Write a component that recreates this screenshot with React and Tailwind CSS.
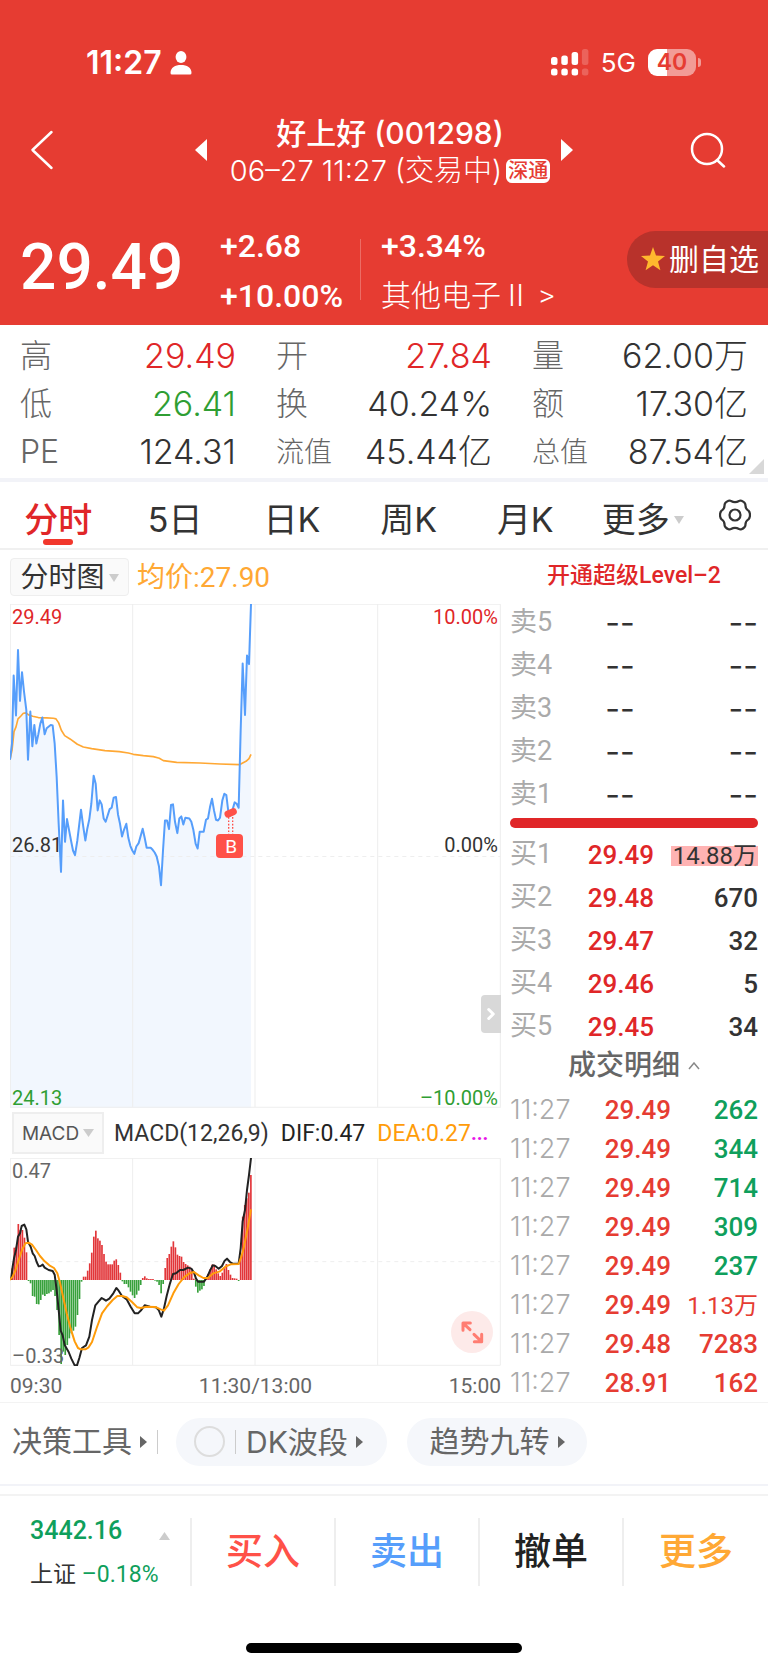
import { ChevronRight } from 'lucide-react'

const stats = [
  { label: '高', value: '29.49', color: 'text-[#e02628]' },
  { label: '开', value: '27.84', color: 'text-[#e02628]' },
  { label: '量', value: '62.00万', color: 'text-[#333]' },
  { label: '低', value: '26.41', color: 'text-[#2f9e33]' },
  { label: '换', value: '40.24%', color: 'text-[#333]' },
  { label: '额', value: '17.30亿', color: 'text-[#333]' },
  { label: 'PE', value: '124.31', color: 'text-[#333]' },
  { label: '流值', value: '45.44亿', color: 'text-[#333]', small: true },
  { label: '总值', value: '87.54亿', color: 'text-[#333]', small: true },
]

const sells = ['卖5', '卖4', '卖3', '卖2', '卖1']

const buys = [
  { label: '买1', price: '29.49', volume: '14.88万' },
  { label: '买2', price: '29.48', volume: '670' },
  { label: '买3', price: '29.47', volume: '32' },
  { label: '买4', price: '29.46', volume: '5' },
  { label: '买5', price: '29.45', volume: '34' },
]

const trades = [
  { price: '29.49', volume: '262', side: 'sell' },
  { price: '29.49', volume: '344', side: 'sell' },
  { price: '29.49', volume: '714', side: 'sell' },
  { price: '29.49', volume: '309', side: 'sell' },
  { price: '29.49', volume: '237', side: 'sell' },
  { price: '29.49', volume: '1.13万', side: 'buy' },
  { price: '29.48', volume: '7283', side: 'buy' },
  { price: '28.91', volume: '162', side: 'buy' },
]

const pricePoints =
  '30,508 36,460 41,256 48,376 54,180 60,332 66,246 72,304 79,360 84,508 91,364 97,468 103,404 109,460 115,432 121,400 127,382 134,432 140,414 152,404 158,406 164,460 170,560 176,700 183,844 189,630 195,754 201,686 213,750 219,780 225,794 232,750 243,658 250,710 256,750 262,714 268,686 274,640 281,556 287,580 293,660 299,630 305,642 311,684 317,694 329,656 335,652 341,622 348,620 354,672 360,700 366,738 372,718 379,700 385,742 391,766 397,780 403,790 409,768 416,758 428,715 434,742 440,772 452,772 458,778 464,786 470,798 477,828 483,884 489,780 495,690 501,690 507,716 513,644 519,642 525,694 532,728 538,684 544,678 550,702 556,682 568,684 574,694 580,718 587,760 593,774 599,724 611,724 618,688 624,684 630,650 636,625 642,660 648,688 654,690 660,682 667,630 673,610 679,614 685,664 691,676 697,660 704,636 710,640 716,652 722,420 728,220 735,374 741,196 747,222 753,42'

const avgPoints =
  '30,508 36,480 42,424 48,410 54,386 62,378 70,369 78,368 86,374 98,378 115,382 140,383 160,384 168,386 176,398 184,420 194,436 210,446 232,462 250,470 275,475 315,481 358,484 385,488 400,492 430,496 460,499 478,504 490,511 530,516 600,518 660,521 718,523 728,518 738,513 747,505 753,492'

// one bar per minute, measured from the zero line
const macdBars = [
  0, 35, 97, 100, 168, 150, 150, 127, 83, -3, -10, -48, -50, -72, -73, -60, -44, -48, -42, -40,
  -35, -30, -48, -90, -165, -252, -215, -225, -195, -175, -160, -152, -140, -105, -57, -5, 10, 10,
  28, 50, 82, 130, 148, 125, 118, 105, 78, 55, 47, 47, 47, 58, 62, 45, 22, -4, -12, -12, -22, -35,
  -46, -54, -44, -32, -15, 6, 11, 5, 3, 3, 3, -2, -5, -15, -40, -12, 36, 66, 78, 100, 116, 98, 76,
  72, 70, 54, 48, 44, 40, 28, 4, -20, -38, -32, -28, -18, 8, 18, 32, 46, 46, 32, 20, 12, 22, 38,
  48, 30, 16, 6, 5, 4, -3, 70, 190, 225, 245, 262, 315,
]

const difPoints =
  '33,390 38,350 42,325 48,300 54,260 60,250 65,228 73,224 79,238 84,275 92,290 98,310 104,318 110,336 116,349 122,348 128,344 134,353 146,360 158,363 164,374 170,420 176,480 182,542 188,556 194,585 206,606 214,626 224,646 231,646 238,624 246,594 258,586 268,560 276,510 286,466 296,454 305,444 312,448 318,452 328,446 340,430 349,414 356,422 366,438 380,448 392,470 404,490 414,490 424,480 434,466 450,470 468,472 476,480 484,500 492,475 500,438 510,400 519,372 528,370 540,360 550,360 564,353 574,356 582,368 588,386 594,395 612,395 622,380 630,362 638,346 646,348 656,356 666,348 674,332 681,326 690,336 698,341 716,341 722,295 728,214 735,180 741,120 747,75 753,24'

const deaPoints =
  '30,390 38,380 46,362 56,330 66,300 76,280 86,278 96,284 108,300 120,318 134,334 148,346 162,354 172,370 180,398 190,444 200,490 212,536 224,574 234,594 242,598 256,598 266,592 276,576 290,534 306,490 322,468 338,450 352,438 366,438 380,442 396,456 412,472 422,474 440,470 466,471 482,478 492,482 504,466 520,430 536,402 552,382 568,370 582,366 596,376 610,384 624,384 640,370 660,364 676,350 692,343 716,342 724,320 732,290 742,240 753,178'

function Triangle({ className, points }) {
  return (
    <svg viewBox="0 0 10 10" preserveAspectRatio="none" className={className} aria-hidden="true">
      <polygon points={points} fill="currentColor" />
    </svg>
  )
}

const LEFT = '10,0 10,10 0,5'
const RIGHT = '0,0 0,10 10,5'
const DOWN = '0,0 10,0 5,10'
const UP = '0,10 10,10 5,0'

function StatusBar() {
  return (
    <div className="flex h-[81px] items-center justify-between pt-[44px] pr-[67px] pl-[86px]">
      <div className="flex items-center gap-2 font-[Inter,sans-serif] text-[32px] leading-none font-semibold">
        11:27
        <svg viewBox="0 0 22 24" className="h-6 w-[22px]" aria-hidden="true">
          <ellipse cx="11" cy="6" rx="5.4" ry="6" fill="#fff" />
          <path d="M0.5 22 C0.5 16.5 5 14 11 14 S21.5 16.5 21.5 22 Q21.5 23.5 20 23.5 H2 Q0.5 23.5 0.5 22 Z" fill="#fff" />
        </svg>
      </div>
      <div className="flex items-center">
        <svg viewBox="0 0 38 27" className="h-[27px] w-[38px]" aria-hidden="true">
          <g fill="#fff">
            <rect x="0" y="8" width="6.5" height="8" rx="2.5" />
            <rect x="10.3" y="6.5" width="6.5" height="9.5" rx="2.5" />
            <rect x="20.6" y="3" width="6.5" height="13" rx="2.5" />
            <rect x="0" y="19.5" width="6.5" height="7" rx="2.5" />
            <rect x="10.3" y="19.5" width="6.5" height="7" rx="2.5" />
            <rect x="20.6" y="19.5" width="6.5" height="7" rx="2.5" />
            <g opacity="0.2">
              <rect x="30.9" y="0" width="6.5" height="16" rx="2.5" />
              <rect x="30.9" y="19.5" width="6.5" height="7" rx="2.5" />
            </g>
          </g>
        </svg>
        <span className="ml-3 font-[Inter,sans-serif] text-[26px] leading-none">5G</span>
        <div className="ml-3 flex h-[27px] w-12 items-center justify-center rounded-[9px] bg-linear-to-r from-white from-40% to-[#f29b96] to-40% font-[Inter,sans-serif] text-[23px] leading-none font-semibold text-[#e63c32]">
          40
        </div>
        <div className="ml-[2px] h-[9px] w-[3px] rounded-r-full bg-[#f29b96]" />
      </div>
    </div>
  )
}

function Header() {
  return (
    <header className="h-[325px] bg-[#e63c32] text-white">
      <StatusBar />
      <div className="mt-[33px] flex h-[72px] items-center justify-between">
        <button className="w-[78px] pl-[30px]" aria-label="返回">
          <svg viewBox="0 0 24 40" className="h-10 w-6" fill="none" stroke="#fff" strokeWidth="2.5" strokeLinecap="round" strokeLinejoin="round">
            <path d="M21.5 2 L2.5 20 L21.5 38" />
          </svg>
        </button>
        <div className="flex items-center">
          <button aria-label="上一只">
            <Triangle className="h-[22px] w-3" points={LEFT} />
          </button>
          <div className="flex w-[354px] flex-col items-center gap-[6px] pt-1 pl-3 font-[Inter,'Noto_Sans_CJK_SC',sans-serif] whitespace-nowrap">
            <h1 className="text-[30px] leading-8 font-medium">好上好 (001298)</h1>
            <div className="flex items-center gap-1 text-[29px] leading-8 font-light">
              06–27 11:27 (交易中)
              <span className="rounded-md bg-white px-[2px] text-[20px] leading-6 font-medium text-[#e63c32]">深通</span>
            </div>
          </div>
          <button aria-label="下一只">
            <Triangle className="h-[22px] w-3" points={RIGHT} />
          </button>
        </div>
        <button className="w-[78px]" aria-label="搜索">
          <svg viewBox="0 0 36 36" className="size-9" fill="none" stroke="#fff" strokeWidth="2.5" strokeLinecap="round">
            <circle cx="17" cy="17" r="15" />
            <path d="M27 28 L34 34.5" />
          </svg>
        </button>
      </div>

      <div className="mt-[35px] flex items-center pl-5 font-[Roboto,'Noto_Sans_CJK_SC',sans-serif]">
        <div className="mb-[6px] w-[200px] text-[64px] leading-none font-medium">29.49</div>
        <div className="flex h-[100px] w-[140px] flex-col justify-between text-[32px] leading-[50px] font-medium">
          <span>+2.68</span>
          <span>+10.00%</span>
        </div>
        <div className="mb-1 h-[61px] w-px bg-white/25" />
        <div className="ml-5 flex h-[100px] flex-1 flex-col justify-between text-[32px] leading-[50px] font-medium">
          <span>+3.34%</span>
          <a href="#sector" className="flex gap-2 text-[30px] font-light">
            <span>其他电子Ⅱ</span>
            <span>&gt;</span>
          </a>
        </div>
        <button className="mb-6 flex h-[57px] w-[141px] items-center justify-end gap-1 rounded-l-full bg-[#b8322b] pr-[9px] text-[30px] font-normal">
          <svg viewBox="0 0 24 24" className="size-6" aria-hidden="true">
            <path d="M12 0 L15 8.4 L24 8.9 L17 14.5 L19.4 23.2 L12 18.3 L4.6 23.2 L7 14.5 L0 8.9 L9 8.4 Z" fill="#ffb82e" />
          </svg>
          删自选
        </button>
      </div>
    </header>
  )
}

function Stats() {
  return (
    <section className="relative border-b-4 border-[#f2f3f8] pt-[7px] pb-[2px]">
      <dl className="grid grid-cols-3 font-[Inter,'Noto_Sans_CJK_SC',sans-serif]">
        {stats.map((s) => (
          <div key={s.label} className="flex h-12 items-center justify-between px-5">
            <dt className={s.small ? 'text-[28px] leading-none font-light text-[#666]' : 'text-[32px] leading-none font-light text-[#666]'}>
              {s.label}
            </dt>
            <dd className={`text-[34px] leading-none font-light ${s.color}`}>{s.value}</dd>
          </div>
        ))}
      </dl>
      <Triangle className="absolute right-1 bottom-1 size-[15px] text-[#d8d8d8]" points="10,0 10,10 0,10" />
    </section>
  )
}

function Tabs() {
  return (
    <nav className="grid h-[68px] grid-cols-[repeat(5,15.2%)_15.4%_8.6%] border-b-2 border-[#f0f0f0] pt-[10px] font-[Inter,'Noto_Sans_CJK_SC',sans-serif] text-[34px] leading-none text-[#333]">
      <button className="relative font-medium text-[#e02628]">
        分时
        <span className="absolute bottom-[3px] left-1/2 h-[6px] w-[30px] -translate-x-1/2 rounded-full bg-[#f2372c]" />
      </button>
      <button>5日</button>
      <button>日K</button>
      <button>周K</button>
      <button>月K</button>
      <button className="flex items-center justify-center gap-1">
        更多
        <Triangle className="h-2 w-[10px] text-[#ccc]" points={DOWN} />
      </button>
      <button className="flex justify-center pt-[7px]" aria-label="设置">
        <svg viewBox="0 0 32 32" className="size-8" fill="none" stroke="#333" strokeWidth="2.2" strokeLinejoin="round">
          <path d="M9.5 1.8 Q11 1.2 12 2 Q16 4.4 20 2 Q21 1.2 22.5 1.8 Q26 3.2 26.4 5.5 Q26.2 9.8 29.4 11.6 Q31 13 31 16 Q31 19 29.4 20.4 Q26.2 22.2 26.4 26.5 Q26 28.8 22.5 30.2 Q21 30.8 20 30 Q16 27.6 12 30 Q11 30.8 9.5 30.2 Q6 28.8 5.6 26.5 Q5.8 22.2 2.6 20.4 Q1 19 1 16 Q1 13 2.6 11.6 Q5.8 9.8 5.6 5.5 Q6 3.2 9.5 1.8 Z" />
          <circle cx="16" cy="16" r="5.5" />
        </svg>
      </button>
    </nav>
  )
}

function PriceChart() {
  return (
    <div className="relative h-[504px] text-[20px] leading-none">
      <svg viewBox="30 42 1473 1509" preserveAspectRatio="none" className="block size-full" fill="none">
        <polygon points={`30,1551 ${pricePoints} 753,1551`} fill="#f2f7fe" />
        <g stroke="#eeeeee" strokeWidth="3">
          <path d="M31 43 H1501 V1549 H31 Z M398 43 V1549 M765 43 V1549 M1133 43 V1549" />
          <path d="M31 798 H1501" strokeDasharray="12 12" />
        </g>
        <polyline points={avgPoints} stroke="#ffa834" strokeWidth="5" strokeLinejoin="round" />
        <polyline points={pricePoints} stroke="#569efb" strokeWidth="6" strokeLinejoin="round" />
        <path d="M686 680 V732 M698 680 V732" stroke="#ff5148" strokeWidth="4" strokeDasharray="5 5" />
        <path d="M684 671 L700 664" stroke="#ff5148" strokeWidth="21" strokeLinecap="round" />
      </svg>
      <span className="absolute top-[3px] left-[2px] text-[#e02628]">29.49</span>
      <span className="absolute top-[3px] right-[3px] text-[#e02628]">10.00%</span>
      <span className="absolute top-[231px] left-[2px] text-[#333]">26.81</span>
      <span className="absolute top-[231px] right-[3px] text-[#333]">0.00%</span>
      <span className="absolute bottom-0 left-[2px] text-[#2f9e33]">24.13</span>
      <span className="absolute right-[3px] bottom-0 text-[#2f9e33]">–10.00%</span>
      <span className="absolute top-[230px] left-[42%] flex h-6 w-[27px] items-center justify-center rounded bg-[#ff5148] pl-[3px] text-[19px] text-white">
        B
      </span>
      <button className="absolute right-0 bottom-[75px] flex h-[38px] w-5 items-center justify-center rounded-l bg-[#d8d8d8] text-white" aria-label="展开">
        <ChevronRight size={18} strokeWidth={4} />
      </button>
    </div>
  )
}

function MacdChart() {
  return (
    <div className="relative h-[208px] text-[20px] leading-none text-[#666]">
      <svg viewBox="30 24 1473 624" preserveAspectRatio="none" className="block size-full" fill="none">
        <g stroke="#eeeeee" strokeWidth="3">
          <path d="M31 25 H1501 V646 H31 Z M398 25 V646 M765 25 V646 M1133 25 V646" />
          <path d="M31 335 H1501" strokeDasharray="12 12" />
        </g>
        {macdBars.map((v, i) => (
          <rect
            key={i}
            x={28 + i * 6.12}
            y={v > 0 ? 390 - v : 390}
            width="5"
            height={Math.abs(v)}
            fill={v > 0 ? '#e23539' : '#37a13b'}
          />
        ))}
        <polyline points={difPoints} stroke="#222" strokeWidth="6" strokeLinejoin="round" />
        <polyline points={deaPoints} stroke="#ff9c0a" strokeWidth="6" strokeLinejoin="round" />
      </svg>
      <span className="absolute top-[3px] left-[2px]">0.47</span>
      <span className="absolute bottom-0 left-[2px]">–0.33</span>
      <button className="absolute right-2 bottom-[13px] size-[42px] rounded-full bg-[#fdeae9]" aria-label="全屏">
        <svg viewBox="0 0 126 126" className="size-full" fill="none" stroke="#ff7d72" strokeWidth="9" strokeLinecap="round" strokeLinejoin="round">
          <path d="M36 58 V36 H58 M37 37 L57 56" />
          <path d="M92 70 V92 H70 M91 91 L69 70" />
        </svg>
      </button>
    </div>
  )
}

function ChartPanel() {
  return (
    <section className="min-w-0 flex-1">
      <div className="flex h-[54px] items-center text-[28px] leading-none">
        <button className="flex h-[38px] w-[119px] items-center justify-center gap-1 rounded border border-[#eee] bg-[#fafafa] pt-[2px] text-[#333]">
          分时图
          <Triangle className="h-2 w-[10px] text-[#ccc]" points={DOWN} />
        </button>
        <span className="ml-2 pt-[2px] text-[#ffa834]">均价:27.90</span>
      </div>
      <PriceChart />
      <div className="flex h-[50px] items-center pl-[2px] text-[23px] leading-none whitespace-nowrap">
        <button className="flex h-[42px] w-[92px] items-center justify-center gap-1 border-2 border-[#eee] bg-[#fafafa] font-[Inter,sans-serif] text-[19px] text-[#555]">
          MACD
          <Triangle className="h-2 w-[11px] text-[#ccc]" points={DOWN} />
        </button>
        <span className="ml-[10px] text-[#333]">MACD(12,26,9)</span>
        <span className="ml-3 text-[#222]">DIF:0.47</span>
        <span className="ml-3 text-[#ff9c0a]">DEA:0.27</span>
        <span className="text-[20px] font-bold text-[#e815e8]">...</span>
      </div>
      <MacdChart />
      <div className="flex h-8 justify-between pt-[10px] text-[21px] leading-none text-[#666]">
        <span>09:30</span>
        <span>11:30/13:00</span>
        <span>15:00</span>
      </div>
    </section>
  )
}

function OrderPanel() {
  return (
    <section className="w-[248px] shrink-0 text-[26px] leading-none">
      <a href="#level2" className="flex h-[51px] items-center justify-center text-[23px] font-medium text-[#e02628]">
        开通超级Level–2
      </a>
      <table className="w-full table-fixed">
        <tbody>
          {sells.map((label) => (
            <tr key={label} className="h-[43px] text-[#333]">
              <th scope="row" className="w-[70px] text-left text-[27px] font-normal text-[#aaa]">{label}</th>
              <td className="w-[80px] text-center font-[Inter,sans-serif] text-[32px]">--</td>
              <td className="text-right font-[Inter,sans-serif] text-[32px]">--</td>
            </tr>
          ))}
        </tbody>
      </table>
      <div className="mt-[2px] mb-[5px] h-[10px] rounded-full bg-[#e02628]" />
      <table className="w-full table-fixed">
        <tbody>
          {buys.map((b) => (
            <tr key={b.label} className="h-[43px]">
              <th scope="row" className="w-[70px] text-left text-[27px] font-normal text-[#aaa]">{b.label}</th>
              <td className="w-[74px] text-right font-medium text-[#e02628]">{b.price}</td>
              <td className="text-right font-medium text-[#333]">
                {b.label === '买1' ? (
                  <span className="inline-block h-5 bg-[#ffb3b3] pr-px pl-[2px] text-[24px] leading-5 font-normal">{b.volume}</span>
                ) : (
                  b.volume
                )}
              </td>
            </tr>
          ))}
        </tbody>
      </table>
      <button className="flex h-[42px] w-full items-center justify-center gap-2 pb-[6px] text-[28px] font-medium text-[#666]">
        成交明细
        <svg viewBox="0 0 12 8" className="h-2 w-3" fill="none" stroke="#888" strokeWidth="1.5">
          <path d="M1 7 L6 1 L11 7" />
        </svg>
      </button>
      <table className="w-full table-fixed">
        <tbody>
          {trades.map((t, i) => (
            <tr key={i} className="h-[39px]">
              <td className="w-[80px] font-[Inter,sans-serif] text-[27px] font-light text-[#aaa]">11:27</td>
              <td className="w-[81px] text-right font-medium text-[#e63c32]">{t.price}</td>
              <td className={t.side === 'buy' ? 'text-right font-medium text-[#e63c32]' : 'text-right font-medium text-[#0f9f5c]'}>
                {t.volume.endsWith('万') ? <span className="text-[24px] font-normal">{t.volume}</span> : t.volume}
              </td>
            </tr>
          ))}
        </tbody>
      </table>
    </section>
  )
}

function Tools() {
  return (
    <div className="flex h-[83px] items-center border-b-2 border-[#f2f3f8] pb-1 pl-3 text-[30px] leading-none font-normal whitespace-nowrap text-[#666]">
      <button className="flex items-center gap-2">
        决策工具
        <Triangle className="h-3 w-[7px]" points={RIGHT} />
      </button>
      <div className="ml-[10px] h-6 w-px bg-[#ccc]" />
      <button className="ml-[18px] flex h-12 w-[211px] items-center rounded-full bg-[#f5f7fb] pl-[18px]">
        <span className="size-[31px] rounded-full border-2 border-[#ddd]" />
        <span className="ml-[10px] h-6 w-px bg-[#ccc]" />
        <span className="mr-2 ml-[10px] font-[Inter,'Noto_Sans_CJK_SC',sans-serif]">DK波段</span>
        <Triangle className="h-3 w-[7px]" points={RIGHT} />
      </button>
      <button className="ml-5 flex h-12 w-[180px] items-center justify-center gap-2 rounded-full bg-[#f5f7fb]">
        趋势九转
        <Triangle className="h-3 w-[7px]" points={RIGHT} />
      </button>
    </div>
  )
}

function BottomBar() {
  return (
    <footer className="mt-2 border-t-2 border-[#f3f3f3] pt-[22px]">
      <div className="grid h-[62px] grid-cols-[4fr_3fr_3fr_3fr_3fr] divide-x-2 divide-[#eee] text-[37px] leading-none font-medium">
        <button className="flex items-center justify-between pr-5 pl-[30px] text-left">
          <span className="flex flex-col gap-5 whitespace-nowrap">
            <span className="text-[25px] text-[#0f9f5c]">3442.16</span>
            <span className="text-[23px] font-normal text-[#333]">
              上证 <span className="text-[#0f9f5c]">–0.18%</span>
            </span>
          </span>
          <Triangle className="mb-8 -ml-2 h-2 w-[11px] shrink-0 text-[#ccc]" points={UP} />
        </button>
        <button className="text-[#ff5148]">买入</button>
        <button className="text-[#569efb]">卖出</button>
        <button className="text-[#222]">撤单</button>
        <button className="text-[#ffa834]">更多</button>
      </div>
      <div className="mx-auto mt-[63px] mb-4 h-[10px] w-[276px] rounded-full bg-black" />
    </footer>
  )
}

export default function App() {
  return (
    <div className="bg-white font-[Roboto,'Noto_Sans_CJK_SC',sans-serif]">
      <Header />
      <Stats />
      <Tabs />
      <main className="flex gap-[9px] border-b border-[#f3f3f3] px-[10px]">
        <ChartPanel />
        <OrderPanel />
      </main>
      <Tools />
      <BottomBar />
    </div>
  )
}
